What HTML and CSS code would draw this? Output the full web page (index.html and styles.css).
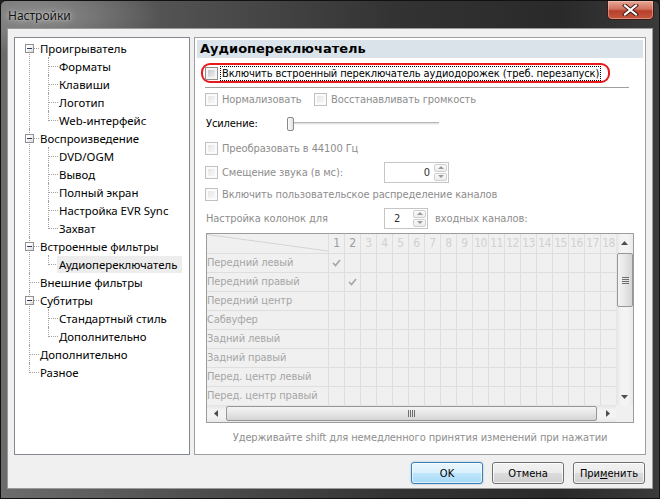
FILE: index.html
```html
<!DOCTYPE html>
<html lang="ru">
<head>
<meta charset="utf-8">
<title>Настройки</title>
<link rel="stylesheet" href="styles.css">
</head>
<body>
<div class="window">
  <div class="titlebar">
    <span class="title">Настройки</span>
    <div class="close">
      <svg width="17" height="12" viewBox="0 0 17 12"><path d="M3 1.5 L14 10.5 M14 1.5 L3 10.5" stroke="#3a1410" stroke-width="4" stroke-linecap="square"/><path d="M3 1.5 L14 10.5 M14 1.5 L3 10.5" stroke="#fff" stroke-width="2.2" stroke-linecap="square"/></svg>
    </div>
  </div>
  <div class="client">
    <div class="panes">
      <div class="treepane">
        <ul class="tree">
          <li><div class="row parent"><span class="exp"></span><span class="lbl">Проигрыватель</span></div>
            <ul>
              <li><div class="row"><span class="lbl">Форматы</span></div></li>
              <li><div class="row"><span class="lbl">Клавиши</span></div></li>
              <li><div class="row"><span class="lbl">Логотип</span></div></li>
              <li><div class="row"><span class="lbl">Web-интерфейс</span></div></li>
            </ul>
          </li>
          <li><div class="row parent"><span class="exp"></span><span class="lbl">Воспроизведение</span></div>
            <ul>
              <li><div class="row"><span class="lbl">DVD/OGM</span></div></li>
              <li><div class="row"><span class="lbl">Вывод</span></div></li>
              <li><div class="row"><span class="lbl">Полный экран</span></div></li>
              <li><div class="row"><span class="lbl">Настройка EVR Sync</span></div></li>
              <li><div class="row"><span class="lbl">Захват</span></div></li>
            </ul>
          </li>
          <li><div class="row parent"><span class="exp"></span><span class="lbl">Встроенные фильтры</span></div>
            <ul>
              <li><div class="row"><span class="lbl selected">Аудиопереключатель</span></div></li>
            </ul>
          </li>
          <li><div class="row"><span class="lbl">Внешние фильтры</span></div></li>
          <li><div class="row parent"><span class="exp"></span><span class="lbl">Субтитры</span></div>
            <ul>
              <li><div class="row"><span class="lbl">Стандартный стиль</span></div></li>
              <li><div class="row"><span class="lbl">Дополнительно</span></div></li>
            </ul>
          </li>
          <li><div class="row"><span class="lbl">Дополнительно</span></div></li>
          <li><div class="row"><span class="lbl">Разное</span></div></li>
        </ul>
      </div>
      <div class="page">
        <div class="page-head">Аудиопереключатель</div>
        <div class="highlight">
          <span class="cb en"></span><span class="focus">Включить встроенный переключатель аудиодорожек (треб. перезапуск)</span>
        </div>
        <div class="sep"></div>
        <div class="opt r-norm">
          <span class="chk norm"><span class="cb"></span>Нормализовать</span>
          <span class="chk"><span class="cb"></span>Восстанавливать громкость</span>
        </div>
        <div class="opt r-gain">
          <span class="enabled gain-lbl">Усиление:</span>
          <div class="slider"><span class="thumb"></span><span class="track"></span></div>
        </div>
        <div class="opt r-conv">
          <span class="chk"><span class="cb"></span>Преобразовать в 44100 Гц</span>
        </div>
        <div class="opt r-shift">
          <span class="chk shift-lbl"><span class="cb"></span>Смещение звука (в мс):</span>
          <div class="spin wide"><span class="val">0</span><span class="spinbtns"><span class="sb up"></span><span class="sb down"></span></span></div>
        </div>
        <div class="opt r-custom">
          <span class="chk"><span class="cb"></span>Включить пользовательское распределение каналов</span>
        </div>
        <div class="opt r-spk">
          <span class="spk-lbl">Настройка колонок для</span>
          <div class="spin narrow"><span class="val">2</span><span class="spinbtns"><span class="sb up"></span><span class="sb down"></span></span></div>
          <span class="spk-lbl2">входных каналов:</span>
        </div>
        <div class="grid">
          <div class="cells">
            <div class="grow ghead">
              <span class="glabel diag"><svg width="121" height="19" viewBox="0 0 121 19"><line x1="0" y1="0.5" x2="121" y2="17" stroke="#d4d4d4" stroke-width="1"/></svg></span>
              <span class="num act">1</span><span class="num act">2</span><span class="num">3</span><span class="num">4</span><span class="num">5</span><span class="num">6</span><span class="num">7</span><span class="num">8</span><span class="num">9</span><span class="num">10</span><span class="num">11</span><span class="num">12</span><span class="num">13</span><span class="num">14</span><span class="num">15</span><span class="num">16</span><span class="num">17</span><span class="num">18</span>
            </div>
            <div class="grow"><span class="glabel">Передний левый</span><span class="gcells"><span class="tick c1"><svg width="9" height="8" viewBox="0 0 9 8"><path d="M1 4 L3.5 6.5 L8 1" fill="none" stroke="#a4a4a4" stroke-width="1.6"/></svg></span></span></div>
            <div class="grow"><span class="glabel">Передний правый</span><span class="gcells"><span class="tick c2"><svg width="9" height="8" viewBox="0 0 9 8"><path d="M1 4 L3.5 6.5 L8 1" fill="none" stroke="#a4a4a4" stroke-width="1.6"/></svg></span></span></div>
            <div class="grow"><span class="glabel">Передний центр</span><span class="gcells"></span></div>
            <div class="grow"><span class="glabel">Сабвуфер</span><span class="gcells"></span></div>
            <div class="grow"><span class="glabel">Задний левый</span><span class="gcells"></span></div>
            <div class="grow"><span class="glabel">Задний правый</span><span class="gcells"></span></div>
            <div class="grow"><span class="glabel">Перед. центр левый</span><span class="gcells"></span></div>
            <div class="grow"><span class="glabel">Перед. центр правый</span><span class="gcells"></span></div>
          </div>
          <div class="vscroll">
            <span class="arr"><svg width="7" height="4" viewBox="0 0 7 4"><path d="M0 4 L3.5 0 L7 4 Z" fill="#4d4d4d"/></svg></span>
            <span class="vthumb"><svg width="7" height="7" viewBox="0 0 7 7"><path d="M0 0.5H7M0 2.5H7M0 4.5H7M0 6.5H7" stroke="#6e6e6e" stroke-width="1"/></svg></span>
            <span class="vtrack"></span>
            <span class="arr"><svg width="7" height="4" viewBox="0 0 7 4"><path d="M0 0 L3.5 4 L7 0 Z" fill="#4d4d4d"/></svg></span>
          </div>
          <div class="hscroll">
            <span class="harr"><svg width="4" height="7" viewBox="0 0 4 7"><path d="M4 0 L0 3.5 L4 7 Z" fill="#4d4d4d"/></svg></span>
            <span class="hthumb"><svg width="7" height="7" viewBox="0 0 7 7"><path d="M0.5 0V7M2.5 0V7M4.5 0V7M6.5 0V7" stroke="#6e6e6e" stroke-width="1"/></svg></span>
            <span class="harr"><svg width="4" height="7" viewBox="0 0 4 7"><path d="M0 0 L4 3.5 L0 7 Z" fill="#4d4d4d"/></svg></span>
          </div>
          <div class="corner"></div>
        </div>
        <div class="hint">Удерживайте shift для немедленного принятия изменений при нажатии</div>
      </div>
    </div>
    <div class="buttons">
      <button class="btn default">OK</button>
      <button class="btn">Отмена</button>
      <button class="btn">При<u>м</u>енить</button>
    </div>
  </div>
</div>
</body>
</html>
```
FILE: styles.css
```css
* { box-sizing: border-box; }
html, body { margin: 0; padding: 0; }
body {
  width: 660px; height: 499px; overflow: hidden;
  background: #1e1e1e;
  font-family: "DejaVu Sans Condensed", "DejaVu Sans", sans-serif;
  font-size: 11px;
  letter-spacing: -0.1px;
}
.window {
  width: 660px; height: 499px;
  border: 1px solid #111;
  border-radius: 6px 6px 0 0;
  padding: 0 6px 9px 6px;
  display: flex; flex-direction: column;
  background:
    radial-gradient(ellipse 120px 40px at 40px 14px, rgba(170,170,170,0.55), rgba(170,170,170,0) 100%),
    linear-gradient(90deg, #6c6c6c 0%, #4e4e4e 30%, #333 60%, #2a2a2a 85%, #3a3a3a 100%);
}
.titlebar {
  height: 27px;
  margin: 0 -6px;
  display: flex; justify-content: space-between; align-items: flex-start;
  padding-left: 7px;
}
.title {
  font-family: "Noto Sans", "Open Sans", sans-serif;
  font-size: 12px; line-height: 15px; letter-spacing: 0;
  padding-top: 7px;
  color: #111;
  text-shadow: 0 0 6px rgba(255,255,255,0.7), 0 0 2px rgba(255,255,255,0.5);
}
.close {
  width: 47px; height: 19px;
  margin-right: 5px;
  border: 1px solid #3b1a16;
  border-top: none;
  border-radius: 0 0 5px 5px;
  background: linear-gradient(180deg, #e7a896 0%, #d2715f 45%, #b8402c 55%, #c4573f 100%);
  box-shadow: inset 0 0 0 1px rgba(255,210,200,0.45);
  display: flex; align-items: center; justify-content: center;
}
.client {
  flex: 1;
  border: 1px solid #9a9a9a;
  background: #f0f0f0;
  padding: 8px 6px 4px 6px;
  display: flex; flex-direction: column;
}
.panes { height: 418px; display: flex; gap: 4px; }
.treepane {
  width: 176px; height: 418px;
  border: 1px solid #828790;
  background: #fff;
  padding-top: 1px;
}
/* tree */
.tree, .tree ul { list-style: none; margin: 0; padding: 0; }
.tree {
  font-family: "Noto Sans", "Open Sans", sans-serif;
  font-size: 11.4px; letter-spacing: 0; color: #000;
}
.tree li { position: relative; }
.tree .row { height: 18px; display: flex; align-items: center; padding-left: 25px; position: relative; z-index: 1; }
.tree .row.parent { padding-left: 10px; }
.tree .exp {
  width: 9px; height: 9px; margin-right: 6px;
  border: 1px solid #919191;
  background: linear-gradient(135deg, #fff 30%, #d8d8d8);
  position: relative;
}
.tree .exp::after {
  content: ""; position: absolute; left: 1px; top: 3px; width: 5px; height: 1px; background: #2b3a55;
}
.tree .lbl { line-height: 17px; padding: 0 2px; margin-left: -2px; white-space: nowrap; }
.tree .lbl.selected { background: #ededed; padding-right: 5px; }
.tree > li::before {
  content: ""; position: absolute; left: 14px; top: 9px; width: 10px;
  border-top: 1px dotted #a0a0a0;
}
.tree > li::after {
  content: ""; position: absolute; left: 14px; top: 0; bottom: 0;
  border-left: 1px dotted #a0a0a0;
}
.tree > li:first-child::after { top: 9px; }
.tree > li:last-child::after { bottom: auto; height: 10px; }
.tree ul li .row { padding-left: 44px; }
.tree ul li::before {
  content: ""; position: absolute; left: 33px; top: 9px; width: 10px;
  border-top: 1px dotted #a0a0a0;
}
.tree ul li::after {
  content: ""; position: absolute; left: 33px; top: 0; bottom: 0;
  border-left: 1px dotted #a0a0a0;
}
.tree ul li:last-child::after { bottom: auto; height: 10px; }

/* page */
.page {
  width: 452px; height: 418px;
  border: 1px solid #a0a0a0;
  background: #fff;
  display: flex; flex-direction: column;
  color: #8d8d8d;
}
.page-head {
  margin: 2px 2px 0 2px;
  height: 18px;
  background: #dae2ea;
  padding-left: 3px;
  font-family: "DejaVu Sans", sans-serif;
  font-weight: bold; font-size: 13px; line-height: 18px; letter-spacing: 0;
  color: #000;
}
.highlight {
  margin: 5px 0 0 6px;
  width: 409px; height: 20px;
  border: 2px solid #e8191b;
  border-radius: 9px;
  display: flex; align-items: center;
  padding-left: 2px;
  color: #000;
}
.focus { margin-left: 3px; outline: 1px dotted #000; outline-offset: 0; line-height: 13px; padding: 0 1px; white-space: nowrap; }
.sep { margin: 4px 0 0 10px; width: 424px; height: 1px; background: #a0a0a0; }
.opt { display: flex; align-items: center; padding-left: 10px; white-space: nowrap; }
.chk { display: flex; align-items: center; }
.chk .cb { margin-right: 4px; }
.cb {
  width: 13px; height: 13px; flex: none;
  border: 1px solid #c1c1c1;
  padding: 2px;
  background: linear-gradient(135deg, #e6e6e6, #f8f8f8) content-box, #fbfbfb;
}
.cb.en {
  border-color: #8e8f8f;
  background: linear-gradient(135deg, #c3c7cc, #f0f0f0) content-box, #f4f4f4;
}
.r-norm { height: 23px; }
.norm { width: 109px; }
.r-gain { height: 25px; padding-left: 11px; }
.enabled { color: #000; }
.gain-lbl { width: 81px; }
.slider { position: relative; display: flex; align-items: center; height: 15px; }
.thumb {
  width: 7px; height: 14px;
  border: 1px solid #8a8a8a; border-radius: 2px;
  background: linear-gradient(90deg, #fbfbfb, #e2e2e2);
  position: relative; z-index: 1;
}
.track {
  width: 146px; height: 3px; margin-left: -1px;
  border-top: 1px solid #b5b5b5; border-bottom: 1px solid #f4f4f4;
  background: #e3e3e3;
}
.r-conv { height: 25px; }
.r-shift { height: 22px; }
.shift-lbl { width: 179px; }
.spin {
  height: 21px;
  border: 1px solid #c5c5c5;
  background: #fff;
  display: flex; align-items: center; justify-content: flex-end;
  padding-right: 1px;
  color: #333;
}
.spin.wide { width: 65px; }
.spin.narrow { width: 44px; }
.spin .val { padding-right: 4px; font-size: 11px; }
.spin.narrow .val { padding-right: 0; flex: 1; text-align: left; padding-left: 9px; }
.spinbtns { display: flex; flex-direction: column; width: 13px; height: 17px; gap: 1px; }
.sb {
  flex: 1; border: 1px solid #cfcfcf; border-radius: 2px;
  background: linear-gradient(180deg, #fbfbfb, #ececec);
  display: flex; align-items: center; justify-content: center;
}
.sb::after { content: ""; width: 0; height: 0; border-left: 3px solid transparent; border-right: 3px solid transparent; }
.sb.up::after { border-bottom: 3px solid #9a9a9a; }
.sb.down::after { border-top: 3px solid #9a9a9a; }
.r-custom { height: 23px; }
.r-spk { height: 24px; padding-left: 11px; }
.spk-lbl { width: 178px; }
.spk-lbl2 { margin-left: 7px; }

/* grid */
.grid {
  margin: 3px 0 0 11px;
  width: 428px; height: 190px;
  border: 1px solid #9c9c9c;
  background: #f0f0f0;
  display: grid;
  grid-template-columns: 409px 17px;
  grid-template-rows: 171px 17px;
}
.cells { overflow: hidden; }
.grow { display: flex; height: 19px; border-bottom: 1px solid #dedede; }
.grow.ghead { height: 20px; }
.glabel { width: 121px; flex: none; color: #a6a6a6; line-height: 18px; white-space: nowrap; overflow: hidden; }
.glabel.diag { display: flex; }
.num {
  width: 16px; flex: none; border-left: 1px solid #dedede;
  text-align: center; line-height: 19px; color: #d0d0d0;
  font-size: 12px; letter-spacing: -0.5px;
}
.num.act { color: #9c9c9c; }
.gcells {
  width: 288px; flex: none; display: flex; align-items: center;
  background: repeating-linear-gradient(90deg, #dedede 0 1px, transparent 1px 16px);
}
.tick { width: 16px; display: flex; justify-content: center; padding-left: 1px; }
.tick.c2 { margin-left: 16px; }
.vscroll {
  display: flex; flex-direction: column; align-items: stretch;
  background: linear-gradient(90deg, #e4e4e4, #f3f3f3 30%, #f3f3f3 70%, #e8e8e8);
}
.arr { height: 17px; display: flex; align-items: center; justify-content: center; }
.vthumb {
  height: 54px; margin: 2px 0 0 1px;
  border: 1px solid #979797; border-radius: 2px;
  background: linear-gradient(90deg, #f3f3f3, #e6e6e6 50%, #d4d4d4);
  display: flex; align-items: center; justify-content: center;
}
.vtrack { flex: 1; }
.hscroll {
  display: flex; align-items: stretch;
  background: linear-gradient(180deg, #e4e4e4, #f3f3f3 30%, #f3f3f3 70%, #e8e8e8);
}
.harr { width: 17px; display: flex; align-items: center; justify-content: center; }
.hthumb {
  width: 371px; margin: 1px 0 1px 2px;
  border: 1px solid #979797; border-radius: 2px;
  background: linear-gradient(180deg, #f3f3f3, #e6e6e6 50%, #d4d4d4);
  display: flex; align-items: center; justify-content: center;
}
.hscroll .harr:last-child { margin-left: auto; }
.corner { background: #f0f0f0; }
.hint { margin-top: 8px; text-align: center; line-height: 13px; color: #8e8e8e; }

/* buttons */
.buttons { margin-top: 7px; display: flex; justify-content: flex-end; gap: 9px; padding-right: 1px; }
.btn {
  width: 72px; height: 22px;
  font-family: "DejaVu Sans Condensed", "DejaVu Sans", sans-serif;
  font-size: 11px; color: #000;
  border: 1px solid #707070; border-radius: 3px;
  background: linear-gradient(180deg, #f2f2f2 0%, #ebebeb 49%, #dddddd 50%, #cfcfcf 100%);
  box-shadow: inset 0 0 0 1px rgba(255,255,255,0.75);
  padding: 0;
}
.btn.default {
  border-color: #3c7fb1;
  background: linear-gradient(180deg, #eaf6fd 0%, #d9f0fc 49%, #bee6fd 50%, #a7d9f5 100%);
  box-shadow: inset 0 0 0 1px rgba(255,255,255,0.6), 0 0 2px rgba(60,127,177,0.5);
}
.btn u { text-decoration: underline; }
```
